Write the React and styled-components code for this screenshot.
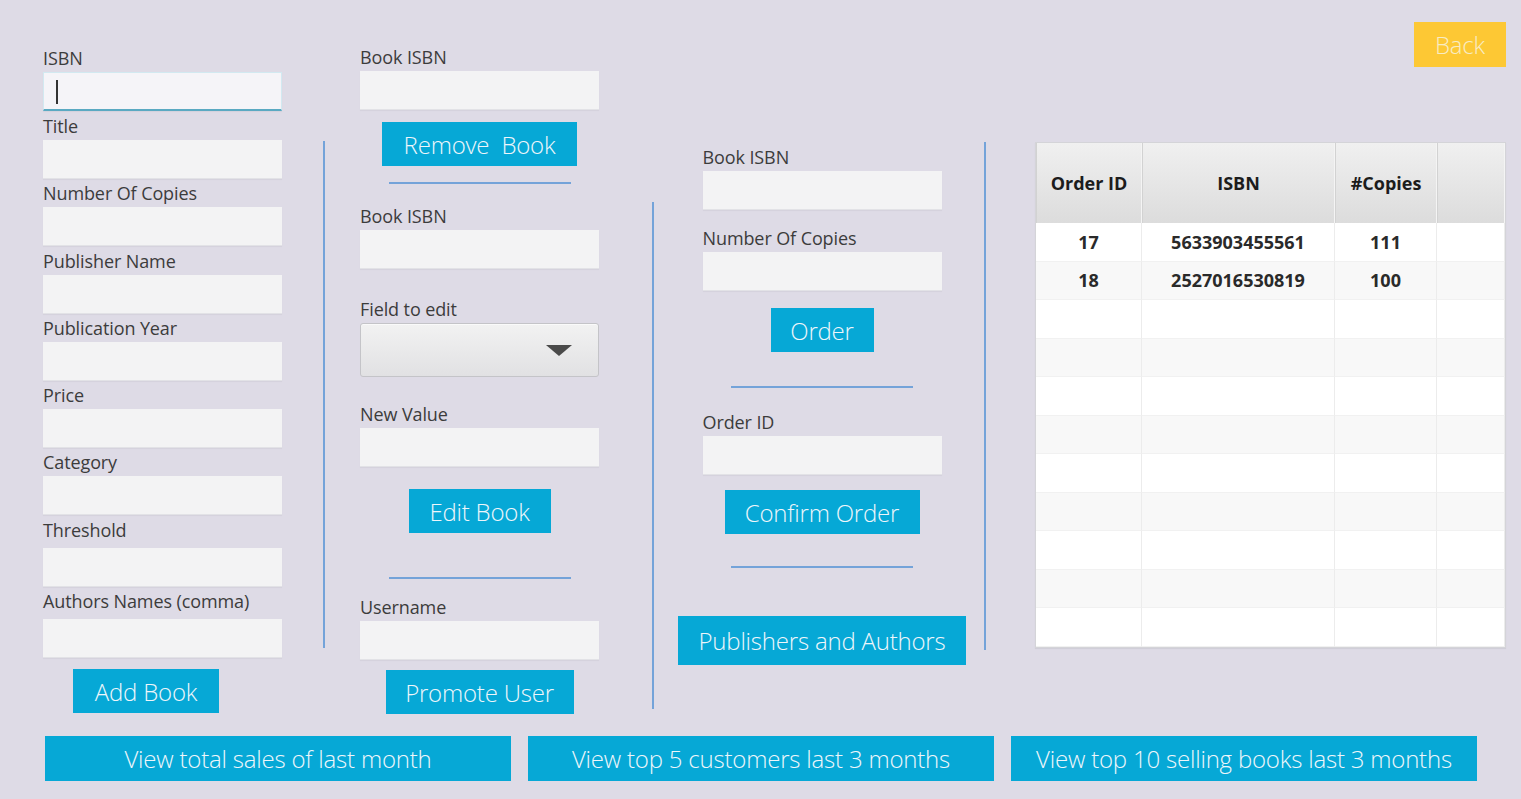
import React from "react";
import styled, { createGlobalStyle } from "styled-components";

const GlobalStyle = createGlobalStyle`
  html, body {
    margin: 0;
    padding: 0;
    background: #dedbe6;
  }
  * {
    box-sizing: border-box;
  }
`;

const StyledPage = styled.div`
  width: 1521px;
  height: 799px;
  padding-left: 43px;
  background: #dedbe6;
  font-family: "Open Sans", "Noto Sans", sans-serif;
  color: #3a3a3a;
  overflow: hidden;
`;

const StyledTopRow = styled.div`
  display: flex;
  align-items: flex-start;
  height: 714px;
`;

const StyledColumn = styled.div`
  display: flex;
  flex-direction: column;
  align-items: ${({ $center }) => ($center ? "center" : "flex-start")};
  width: ${({ $width }) => $width || 239}px;
  margin-left: ${({ $ml }) => $ml || 0}px;
  padding-top: ${({ $pt }) => $pt || 0}px;
`;

const StyledDivider = styled.div`
  width: 2px;
  background: #74a3d9;
  margin-left: ${({ $ml }) => $ml}px;
  margin-top: ${({ $mt }) => $mt}px;
  height: ${({ $h }) => $h}px;
`;

const StyledField = styled.div`
  display: flex;
  flex-direction: column;
  width: 239px;
  margin-top: ${({ $mt }) => $mt || 0}px;
`;

const StyledLabel = styled.label`
  font-size: 18px;
  line-height: 20px;
  height: 20px;
  color: #3c3c3c;
  letter-spacing: -0.1px;
  margin-bottom: ${({ $gap }) => $gap || 4}px;
  white-space: nowrap;
`;

const StyledInput = styled.div`
  position: relative;
  height: 39px;
  background: #f3f3f4;
  border-bottom: 1px solid #e2e2e6;
  box-shadow: 0 1px 1px rgba(0, 0, 0, 0.04);
  ${({ $focused }) =>
    $focused &&
    `
    background: #f5f4f8;
    border: 1px solid #d2e9f1;
    border-bottom: 2px solid #5aa9c2;
  `}
`;

const StyledCaret = styled.span`
  position: absolute;
  left: 12px;
  top: 7px;
  width: 2px;
  height: 24px;
  background: #333;
`;

const StyledCombo = styled.div`
  position: relative;
  height: 54px;
  border: 1px solid #c4c4c8;
  border-radius: 3px;
  background: linear-gradient(#f2f2f2, #e1e1e3);
  box-shadow: inset 0 1px 0 #fafafa;
`;

const StyledArrow = styled.span`
  position: absolute;
  right: 26px;
  top: 21px;
  width: 0;
  height: 0;
  border-left: 13px solid transparent;
  border-right: 13px solid transparent;
  border-top: 11px solid #4a4a4a;
`;

const StyledButton = styled.button`
  display: flex;
  align-items: center;
  justify-content: center;
  width: ${({ $width }) => $width}px;
  height: ${({ $height }) => $height || 44}px;
  margin-top: ${({ $mt }) => $mt || 0}px;
  margin-left: ${({ $ml }) => $ml || 0}px;
  padding: 0;
  border: none;
  background: #06a8d6;
  color: #eef6fb;
  font-family: "Open Sans", "Noto Sans", sans-serif;
  font-weight: 300;
  font-size: 24px;
  letter-spacing: -0.2px;
  white-space: pre;
  cursor: pointer;
`;

const StyledBackButton = styled(StyledButton)`
  align-self: flex-end;
  background: #fdc834;
  color: #f8ecc4;
`;

const StyledRule = styled.div`
  width: ${({ $width }) => $width || 182}px;
  height: 2px;
  background: #74a3d9;
  margin-top: ${({ $mt }) => $mt}px;
`;

const StyledRightPanel = styled.div`
  display: flex;
  flex-direction: column;
  width: 471px;
  margin-left: 49px;
  padding-top: 22px;
`;

const StyledTable = styled.div`
  margin-top: 75px;
  height: 506px;
  display: grid;
  grid-template-columns: 106px 193px 102px 1fr;
  grid-template-rows: 80px repeat(11, 1fr);
  background: #ffffff;
  border: 1px solid #d4d4d8;
  box-shadow: 0 1px 1px rgba(0, 0, 0, 0.06);
`;

const StyledHeadCell = styled.div`
  display: flex;
  align-items: center;
  justify-content: center;
  background: linear-gradient(#f0f0f0, #dcdcdc);
  border-right: 1px solid #f4f4f4;
  border-left: 1px solid #d2d2d2;
  font-family: "Open Sans", "Noto Sans", sans-serif;
  font-weight: 700;
  font-size: 18px;
  color: #1c1c1c;
`;

const StyledCell = styled.div`
  display: flex;
  align-items: center;
  justify-content: center;
  background: ${({ $odd }) => ($odd ? "#f8f8f8" : "#ffffff")};
  border-right: 1px solid #ececec;
  border-bottom: 1px solid #f1f1f1;
  font-weight: 700;
  font-size: 18px;
  color: #2a2a2a;
`;

const StyledBottomBar = styled.div`
  display: flex;
  gap: 17px;
  margin-top: 22px;
  padding-left: 2px;
`;

const Field = ({ label, mt, gap, focused, children }) => (
  <StyledField $mt={mt}>
    <StyledLabel $gap={gap}>{label}</StyledLabel>
    {children || (
      <StyledInput $focused={focused}>{focused && <StyledCaret />}</StyledInput>
    )}
  </StyledField>
);

const orders = [
  ["17", "5633903455561", "111"],
  ["18", "2527016530819", "100"],
];

const App = () => {
  const rows = [];
  for (let i = 0; i < 11; i++) {
    rows.push(orders[i] || ["", "", ""]);
  }

  return (
    <>
      <GlobalStyle />
      <StyledPage>
        <StyledTopRow>
          <StyledColumn $pt={48}>
            <Field label="ISBN" focused />
            <Field label="Title" mt={5} />
            <Field label="Number Of Copies" mt={4} />
            <Field label="Publisher Name" mt={5} />
            <Field label="Publication Year" mt={4} />
            <Field label="Price" mt={4} />
            <Field label="Category" mt={4} />
            <Field label="Threshold" mt={5} gap={8} />
            <Field label="Authors Names (comma)" mt={4} gap={8} />
            <StyledButton $width={146} $mt={11} $ml={30}>
              Add Book
            </StyledButton>
          </StyledColumn>

          <StyledDivider $ml={41} $mt={141} $h={507} />

          <StyledColumn $ml={35} $pt={47} $center>
            <Field label="Book ISBN" />
            <StyledButton $width={195} $mt={12}>
              {"Remove  Book"}
            </StyledButton>
            <StyledRule $mt={16} />
            <Field label="Book ISBN" mt={22} />
            <Field label="Field to edit" mt={30}>
              <StyledCombo>
                <StyledArrow />
              </StyledCombo>
            </Field>
            <Field label="New Value" mt={27} />
            <StyledButton $width={142} $mt={22}>
              Edit Book
            </StyledButton>
            <StyledRule $mt={44} />
            <Field label="Username" mt={18} />
            <StyledButton $width={188} $mt={10}>
              Promote User
            </StyledButton>
          </StyledColumn>

          <StyledDivider $ml={53} $mt={202} $h={507} />

          <StyledColumn $ml={24} $width={288} $pt={147} $center>
            <Field label="Book ISBN" />
            <Field label="Number Of Copies" mt={18} />
            <StyledButton $width={103} $mt={17}>
              Order
            </StyledButton>
            <StyledRule $mt={34} />
            <Field label="Order ID" mt={24} />
            <StyledButton $width={195} $mt={15}>
              Confirm Order
            </StyledButton>
            <StyledRule $mt={32} />
            <StyledButton $width={288} $height={49} $mt={48}>
              Publishers and Authors
            </StyledButton>
          </StyledColumn>

          <StyledDivider $ml={18} $mt={142} $h={508} />

          <StyledRightPanel>
            <StyledBackButton $width={92} $height={45}>
              Back
            </StyledBackButton>
            <StyledTable>
              <StyledHeadCell>Order ID</StyledHeadCell>
              <StyledHeadCell>ISBN</StyledHeadCell>
              <StyledHeadCell>#Copies</StyledHeadCell>
              <StyledHeadCell />
              {rows.map((row, i) => (
                <React.Fragment key={i}>
                  {row.map((value, j) => (
                    <StyledCell key={j} $odd={i % 2 === 1}>
                      {value}
                    </StyledCell>
                  ))}
                  <StyledCell $odd={i % 2 === 1} />
                </React.Fragment>
              ))}
            </StyledTable>
          </StyledRightPanel>
        </StyledTopRow>

        <StyledBottomBar>
          <StyledButton $width={466} $height={45}>
            View total sales of last month
          </StyledButton>
          <StyledButton $width={466} $height={45}>
            View top 5 customers last 3 months
          </StyledButton>
          <StyledButton $width={466} $height={45}>
            View top 10 selling books last 3 months
          </StyledButton>
        </StyledBottomBar>
      </StyledPage>
    </>
  );
};

export default App;
